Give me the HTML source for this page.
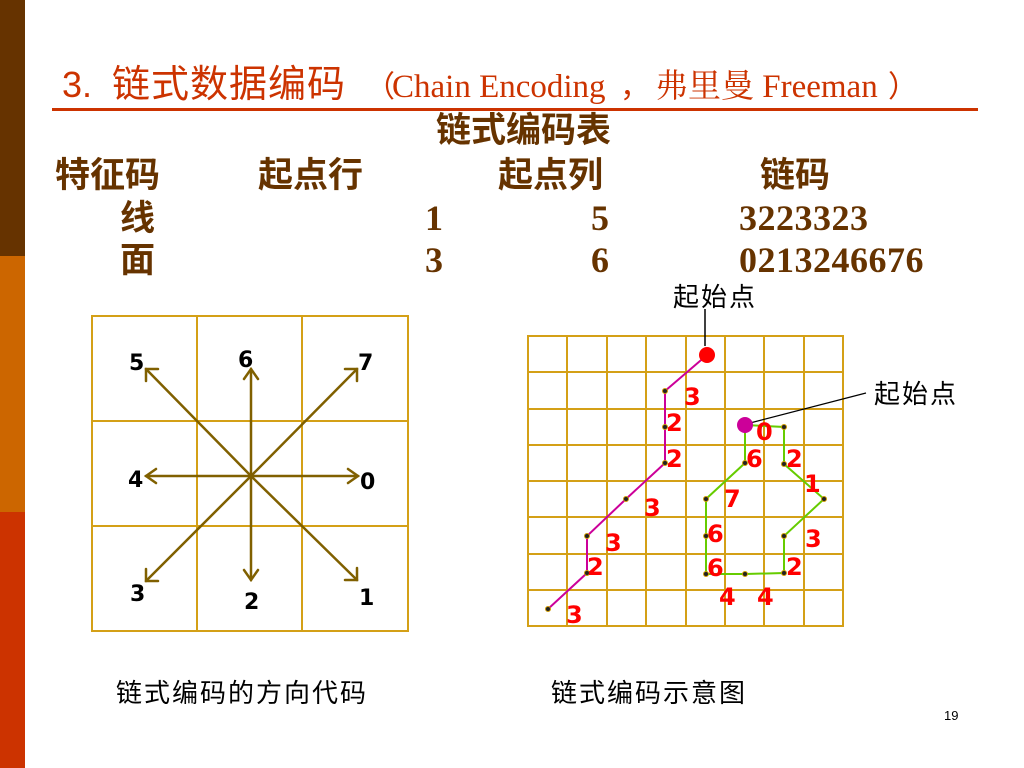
<!DOCTYPE html>
<html><head><meta charset="utf-8"><style>
body{margin:0;width:1024px;height:768px;overflow:hidden;background:#fff;}
svg{display:block}
</style></head><body>
<svg width="1024" height="768" xmlns="http://www.w3.org/2000/svg" font-family="Liberation Sans, Noto Sans CJK SC, sans-serif">
<rect x="0" y="0" width="25" height="256" fill="#663300"/>
<rect x="0" y="256" width="25" height="256" fill="#cc6600"/>
<rect x="0" y="512" width="25" height="256" fill="#cc3300"/>
<text x="62" y="97" font-size="36" fill="#cc3300"><tspan>3.</tspan><tspan x="112" font-size="38" letter-spacing="1">链式数据编码</tspan><tspan x="365" font-size="30">（</tspan><tspan x="392" font-family="Liberation Serif, Noto Serif CJK SC, serif" font-size="33">Chain Encoding</tspan><tspan x="620" font-size="30">，</tspan><tspan x="655" font-family="Liberation Serif, Noto Serif CJK SC, serif" font-size="33">弗里曼 Freeman</tspan><tspan x="888" font-size="30">）</tspan></text>
<rect x="52" y="108" width="926" height="3" fill="#cc3300"/>
<g fill="#663300" font-family="Liberation Serif, Noto Serif CJK SC, serif" font-weight="bold" font-size="36">
<g font-family="Liberation Sans, Noto Sans CJK SC, sans-serif" font-weight="bold" font-size="35">
<text x="436" y="142">链式编码表</text>
<text x="55" y="187">特征码</text><text x="258" y="187">起点行</text><text x="498" y="187">起点列</text><text x="760" y="187">链码</text>
<text x="120" y="230">线</text><text x="120" y="272">面</text></g>
<text x="425" y="230">1</text><text x="591" y="230">5</text><text x="739" y="230" letter-spacing="0.5">3223323</text>
<text x="425" y="272">3</text><text x="591" y="272">6</text><text x="739" y="272" letter-spacing="0.5">0213246676</text>
</g>
<g stroke="#d4a017" stroke-width="2" fill="none">
<rect x="92" y="316" width="316" height="315"/>
<line x1="197" y1="316" x2="197" y2="631"/><line x1="302" y1="316" x2="302" y2="631"/>
<line x1="92" y1="421" x2="408" y2="421"/><line x1="92" y1="526" x2="408" y2="526"/>
</g>
<g stroke="#806000" stroke-width="2.5" fill="none" stroke-linecap="round">
<line x1="251" y1="476" x2="146" y2="369"/><line x1="251" y1="476" x2="251" y2="369"/>
<line x1="251" y1="476" x2="357" y2="369"/><line x1="251" y1="476" x2="358" y2="476"/>
<line x1="251" y1="476" x2="146" y2="476"/><line x1="251" y1="476" x2="146" y2="581"/>
<line x1="251" y1="476" x2="251" y2="580"/><line x1="251" y1="476" x2="357" y2="580"/>
<polyline points="146,381 146,369 158,369"/><polyline points="244,379 251,369 258,379"/>
<polyline points="345,369 357,369 357,381"/><polyline points="348,469 358,476 348,483"/>
<polyline points="156,469 146,476 156,483"/><polyline points="146,569 146,581 158,581"/>
<polyline points="244,570 251,580 258,570"/><polyline points="345,580 357,580 357,568"/>
</g>
<g font-weight="bold" font-size="22" fill="#000" font-family="DejaVu Sans, sans-serif">
<text x="129" y="370">5</text><text x="238" y="367">6</text><text x="358" y="370">7</text>
<text x="128" y="487">4</text><text x="360" y="489">0</text>
<text x="130" y="601">3</text><text x="244" y="609">2</text><text x="359" y="605">1</text>
</g>
<g stroke="#d4a017" stroke-width="2" fill="none">
<rect x="528" y="336" width="315" height="290"/>
<line x1="567" y1="336" x2="567" y2="626"/><line x1="607" y1="336" x2="607" y2="626"/>
<line x1="646" y1="336" x2="646" y2="626"/><line x1="686" y1="336" x2="686" y2="626"/>
<line x1="725" y1="336" x2="725" y2="626"/><line x1="764" y1="336" x2="764" y2="626"/>
<line x1="804" y1="336" x2="804" y2="626"/>
<line x1="528" y1="372" x2="843" y2="372"/><line x1="528" y1="409" x2="843" y2="409"/>
<line x1="528" y1="445" x2="843" y2="445"/><line x1="528" y1="481" x2="843" y2="481"/>
<line x1="528" y1="517" x2="843" y2="517"/><line x1="528" y1="554" x2="843" y2="554"/>
<line x1="528" y1="590" x2="843" y2="590"/>
</g>
<line x1="705" y1="309" x2="705" y2="346" stroke="#000" stroke-width="1.5"/>
<line x1="750" y1="423" x2="866" y2="393" stroke="#000" stroke-width="1.2"/>
<polyline points="707,355 665,391 665,427 665,463 626,499 587,536 587,573 548,609" stroke="#cc0099" stroke-width="2" fill="none"/>
<polyline points="745,425 784,427 784,464 824,499 784,536 784,573 745,574 706,574 706,536 706,499 745,463 745,425" stroke="#66cc00" stroke-width="2" fill="none"/>
<g fill="#222" stroke="#c90" stroke-width="1">
<circle cx="665" cy="391" r="2.5"/><circle cx="665" cy="427" r="2.5"/><circle cx="665" cy="463" r="2.5"/><circle cx="626" cy="499" r="2.5"/><circle cx="587" cy="536" r="2.5"/><circle cx="587" cy="573" r="2.5"/><circle cx="548" cy="609" r="2.5"/>
<circle cx="784" cy="427" r="2.5"/><circle cx="784" cy="464" r="2.5"/><circle cx="824" cy="499" r="2.5"/><circle cx="784" cy="536" r="2.5"/><circle cx="784" cy="573" r="2.5"/><circle cx="745" cy="574" r="2.5"/><circle cx="706" cy="574" r="2.5"/><circle cx="706" cy="536" r="2.5"/><circle cx="706" cy="499" r="2.5"/><circle cx="745" cy="463" r="2.5"/>
</g>
<circle cx="707" cy="355" r="8" fill="#ff0000"/>
<circle cx="745" cy="425" r="8" fill="#cc0099"/>
<g font-weight="bold" font-size="24" fill="#ff0000" font-family="DejaVu Sans, sans-serif">
<text x="684" y="405">3</text><text x="666" y="431">2</text><text x="666" y="467">2</text>
<text x="644" y="516">3</text><text x="605" y="551">3</text><text x="587" y="575">2</text><text x="566" y="623">3</text>
<text x="756" y="440">0</text><text x="746" y="467">6</text><text x="786" y="467">2</text><text x="804" y="492">1</text>
<text x="724" y="507">7</text><text x="707" y="542">6</text><text x="805" y="547">3</text>
<text x="707" y="576">6</text><text x="786" y="575">2</text><text x="719" y="605">4</text><text x="757" y="605">4</text>
</g>
<g font-size="26" fill="#000" letter-spacing="2">
<text x="673" y="306">起始点</text>
<text x="874" y="403">起始点</text>
<text x="116" y="702">链式编码的方向代码</text>
<text x="551" y="702">链式编码示意图</text>
</g>
<text x="944" y="720" font-size="13" fill="#000">19</text>
</svg>
</body></html>
